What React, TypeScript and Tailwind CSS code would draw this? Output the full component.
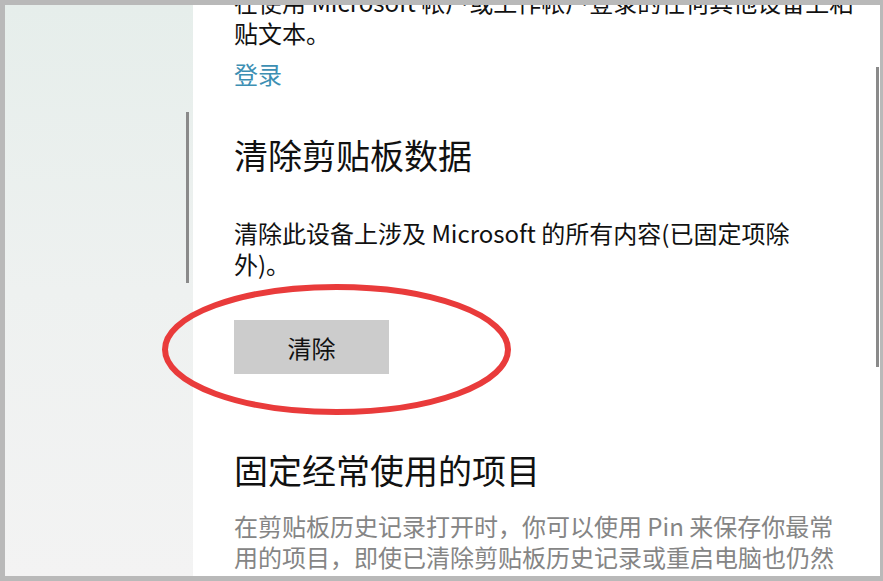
export default function App() {
  return (
    <div className="relative flex w-[883px] h-[581px] overflow-hidden border-[#b9b9b9] border-t-[5px] border-l-[5px] border-b-[5px] border-r-[3px] font-['Noto_Sans_CJK_SC','Noto_Sans',sans-serif]">
      {/* left nav area with its scrollbar */}
      <div className="flex justify-end w-[188px] shrink-0 pr-[4px] bg-gradient-to-b from-[#e6eeeb] via-[#eef1f0] to-[#f3f3f3]">
        <div className="w-[3px] h-[171px] mt-[107px] bg-[#8a8a8a]" />
      </div>

      <div className="flex flex-1 bg-white">
        <div className="flex-1 overflow-hidden pl-[41px]">
          <div className="-mt-[19px] text-[24px] leading-[31px] text-[#111]">
            <div className="whitespace-nowrap">在使用 Microsoft 帐户或工作帐户登录的任何其他设备上粘</div>
            <div className="whitespace-nowrap">贴文本。</div>
          </div>
          <div className="mt-[10px] text-[24px] leading-[31px] text-[#3d8fb3]">登录</div>

          <h2 className="mt-[44px] text-[34px] leading-[44px] text-[#111]">清除剪贴板数据</h2>
          <div className="mt-[40px] text-[24px] leading-[31px] text-[#111]">
            <div className="whitespace-nowrap">清除此设备上涉及 Microsoft 的所有内容(已固定项除</div>
            <div className="whitespace-nowrap">外)。</div>
          </div>
          <button className="mt-[41px] flex items-center justify-center w-[155px] h-[54px] bg-[#cccccc] text-[24px] leading-[31px] text-[#111]">
            清除
          </button>

          <h2 className="mt-[74px] text-[34px] leading-[44px] text-[#111]">固定经常使用的项目</h2>
          <div className="mt-[18px] text-[24px] leading-[31px] text-[#858585]">
            <div className="whitespace-nowrap">在剪贴板历史记录打开时，你可以使用 Pin 来保存你最常</div>
            <div className="whitespace-nowrap">用的项目，即使已清除剪贴板历史记录或重启电脑也仍然</div>
          </div>
        </div>
        <div className="w-[3px] h-[300px] mt-[62px] mr-[1px] bg-[#8a8a8a]" />
      </div>

      {/* red annotation ring */}
      <svg className="absolute left-0 top-0 pointer-events-none" width="875" height="571" viewBox="0 0 875 571">
        <ellipse cx="331.5" cy="344.5" rx="171.5" ry="62.5" fill="none" stroke="#e93b3b" strokeWidth="6" />
      </svg>
    </div>
  );
}
